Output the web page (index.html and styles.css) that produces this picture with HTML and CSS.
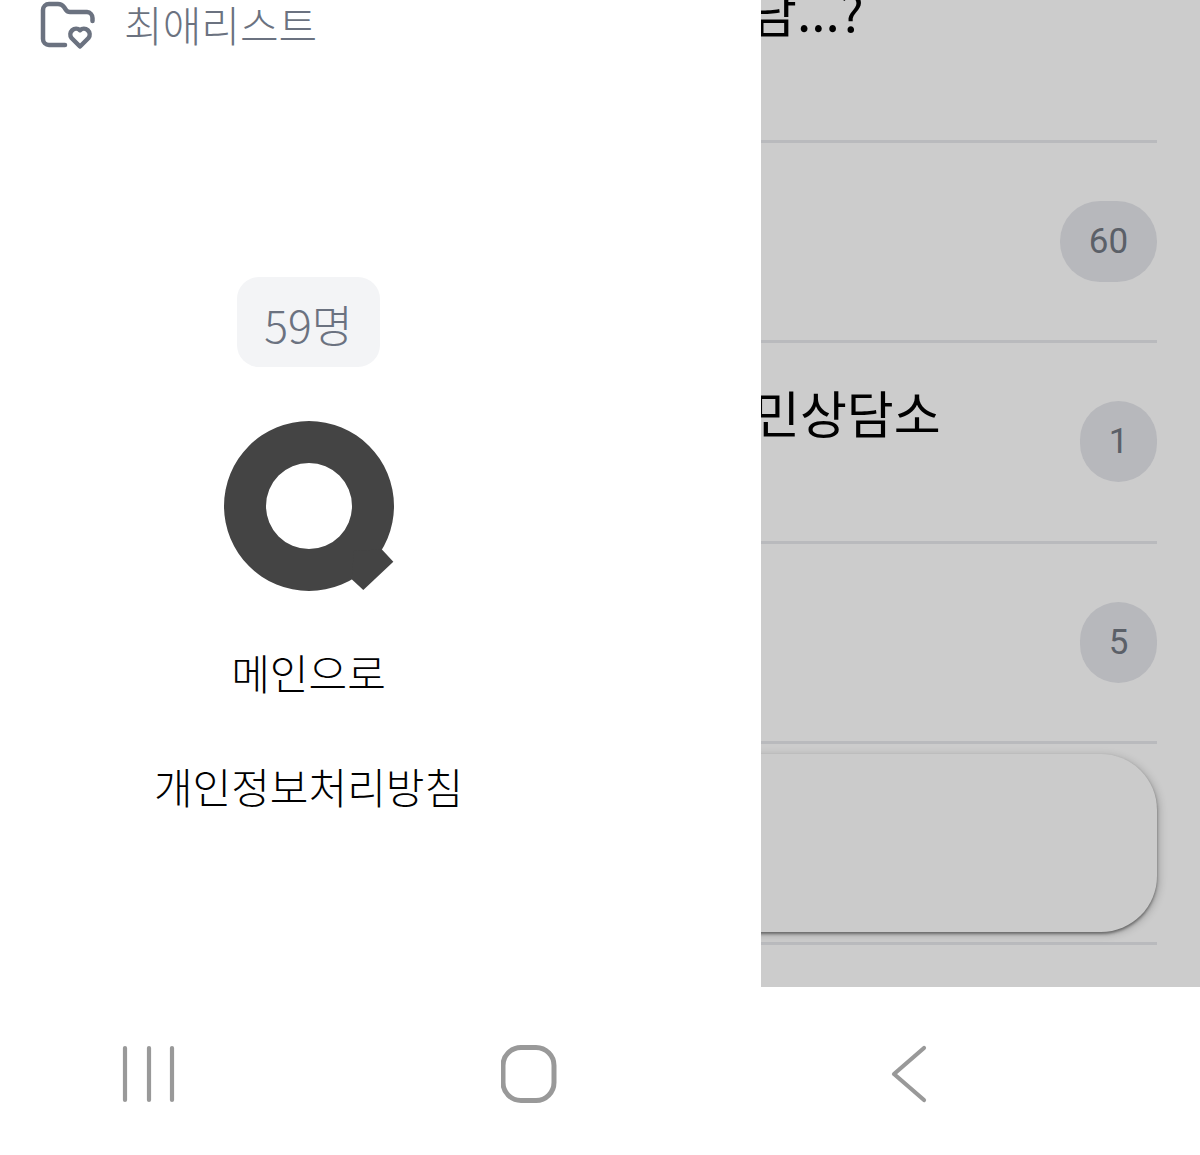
FILE: index.html
```html
<!DOCTYPE html>
<html lang="ko">
<head>
    <meta charset="utf-8">
    <link rel="stylesheet" href="styles.css">
</head>
<body>
    <div class="screen">
        <aside class="drawer">
            <div class="drawer-header">
                <svg class="folder-icon" viewBox="0 0 56 50" fill="none">
                    <path d="M25 45H9a6 6 0 0 1-6-6V10a6 6 0 0 1 6-6h9c3 0 4.500 1 6 3l2 3c1 1.500 2 2 4 2h17a6 6 0 0 1 5.500 6v3"/>
                    <path d="M40 46.500l-8.500-8.500a5.800 5.800 0 0 1 8.500-7.800a5.800 5.800 0 0 1 8.500 7.800z"/>
                </svg>
                <span class="drawer-title">최애리스트</span>
            </div>
            <div class="drawer-body">
                <div class="count-box">59명</div>
                <svg class="logo" viewBox="0 0 170 170">
                    <path fill-rule="evenodd" d="M85 0a85 85 0 1 0 0 170a85 85 0 1 0 0-170zM85 42a43 43 0 1 1 0 86a43 43 0 1 1 0-86z"/>
                    <polygon points="157.700,128.300 169.300,140.700 139.300,169 127.700,158.300 130,130"/>
                </svg>
                <a class="drawer-link link-main">메인으로</a>
                <a class="drawer-link link-policy">개인정보처리방침</a>
            </div>
        </aside>
        <main class="overlay">
            <div class="list">
                <div class="row">
                    <div class="row-title title-first">담...?</div>
                </div>
                <div class="row">
                    <div class="row-title"></div>
                    <div class="count wide">60</div>
                </div>
                <div class="row">
                    <div class="row-title title-third">민상담소</div>
                    <div class="count">1</div>
                </div>
                <div class="row">
                    <div class="row-title"></div>
                    <div class="count">5</div>
                </div>
                <div class="row">
                    <div class="card"></div>
                </div>
            </div>
        </main>
    </div>
    <nav class="navbar">
        <svg class="nav-icon thin" viewBox="0 0 56 60">
            <path d="M4 4V56M28 4V56M51 4V56"/>
        </svg>
        <svg class="nav-icon" viewBox="0 0 56 60">
            <rect x="2" y="3.500" width="51" height="53" rx="18"/>
        </svg>
        <svg class="nav-icon thin" viewBox="0 0 56 60">
            <path d="M43 4L13 30L43 56"/>
        </svg>
    </nav>
</body>
</html>
```

FILE: styles.css
```css
html, body {
    margin: 0;
    height: 1155px;
    overflow: hidden;
    background: #fff;
    font-family: "Noto Sans CJK KR", "Noto Sans", sans-serif;
}

.screen {
    display: flex;
    height: 987px;
}

.drawer {
    width: 761px;
    flex-shrink: 0;
    background: #fff;
}

.drawer-header {
    display: flex;
    align-items: center;
    height: 50px;
    padding-left: 40px;
}

.folder-icon {
    width: 56px;
    height: 50px;
    stroke: #6b7280;
    stroke-width: 4.500;
    stroke-linecap: round;
    stroke-linejoin: round;
}

.drawer-title {
    margin-left: 28px;
    margin-top: -2px;
    font-size: 42px;
    font-weight: 300;
    line-height: 50px;
    color: #6b7280;
}

.drawer-body {
    display: flex;
    flex-direction: column;
    align-items: center;
    width: 617px;
    padding-top: 227px;
}

.count-box {
    width: 143px;
    height: 90px;
    border-radius: 22px;
    background: #f3f4f6;
    color: #6b7280;
    font-size: 44.500px;
    font-weight: 300;
    line-height: 94px;
    text-align: center;
}

.logo {
    width: 170px;
    height: 170px;
    margin-top: 54px;
    fill: #444;
}

.drawer-link {
    font-size: 42px;
    font-weight: 300;
    line-height: 56px;
    color: #000;
}

.link-main {
    margin-top: 53px;
}

.link-policy {
    margin-top: 58px;
}

.overlay {
    flex: 1;
    overflow: hidden;
    background: #ccc;
}

.list {
    margin-top: -58px;
    margin-right: 43px;
}

.row {
    box-sizing: border-box;
    display: flex;
    justify-content: space-between;
    align-items: center;
    height: 200.500px;
    border-bottom: 3px solid #b9babd;
}

.row-title {
    align-self: flex-start;
    padding-top: 34px;
    font-size: 51px;
    line-height: 70px;
    color: #000;
    white-space: nowrap;
}

.title-first {
    margin-left: -11px;
}

.title-third {
    margin-left: -8px;
}

.count {
    width: 77px;
    height: 81px;
    border-radius: 40px;
    background: #b7b8bc;
    color: #5b6068;
    font-family: Roboto, sans-serif;
    font-size: 35px;
    line-height: 81px;
    text-align: center;
}

.count.wide {
    width: 97px;
}

.card {
    flex: 1;
    height: 178px;
    margin-left: -80px;
    border-radius: 56px;
    background: #cbcbcb;
    box-shadow: 0 2px 3px rgba(0, 0, 0, 0.4), 2px 2px 9px rgba(0, 0, 0, 0.22);
}

.navbar {
    display: flex;
    gap: 324px;
    height: 168px;
    padding: 57px 0 0 121px;
    box-sizing: border-box;
    background: #fff;
}

.nav-icon {
    width: 56px;
    height: 60px;
    fill: none;
    stroke: #999;
    stroke-width: 5;
    stroke-linecap: round;
    stroke-linejoin: round;
}

.nav-icon.thin {
    stroke-width: 4.200;
}
```
